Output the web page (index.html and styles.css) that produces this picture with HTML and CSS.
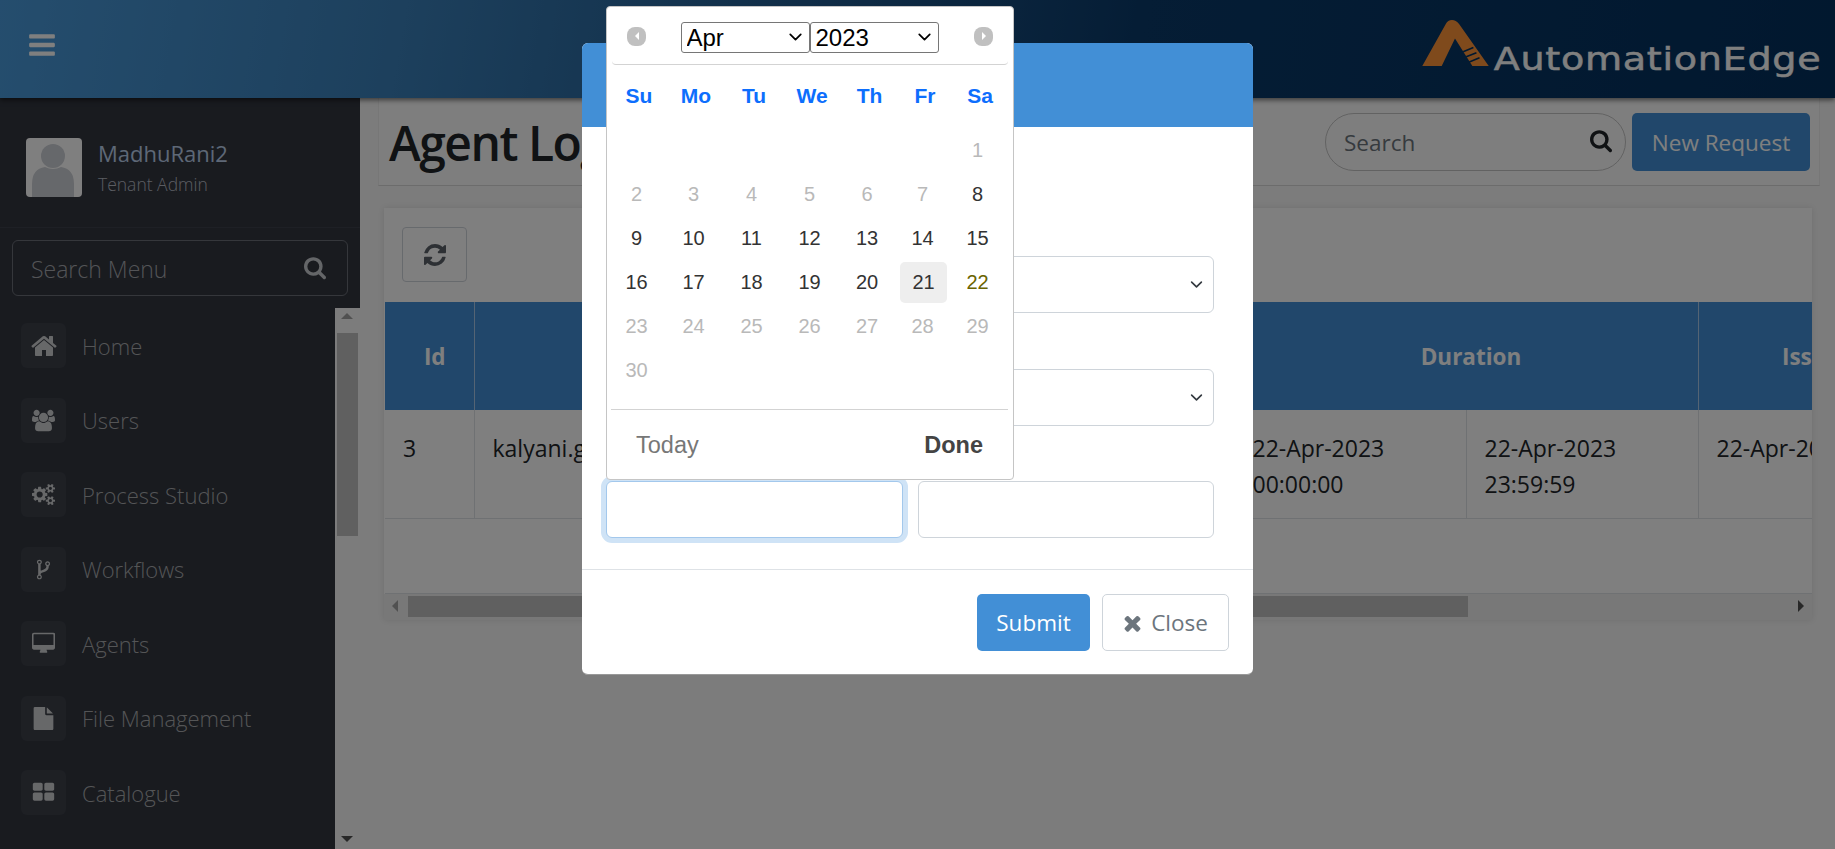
FILE: index.html
```html
<!DOCTYPE html>
<html lang="en">
<head>
<meta charset="utf-8">
<title>Agent Logs</title>
<link rel="stylesheet" href="styles.css">
</head>
<body>
<svg class="defs" aria-hidden="true">
  <symbol id="i-bars" viewBox="0 0 1536 1792"><path d="M1536 1344v128q0 26-19 45t-45 19h-1408q-26 0-45-19t-19-45v-128q0-26 19-45t45-19h1408q26 0 45 19t19 45zm0-512v128q0 26-19 45t-45 19h-1408q-26 0-45-19t-19-45v-128q0-26 19-45t45-19h1408q26 0 45 19t19 45zm0-512v128q0 26-19 45t-45 19h-1408q-26 0-45-19t-19-45v-128q0-26 19-45t45-19h1408q26 0 45 19t19 45z"/></symbol>
  <symbol id="i-search" viewBox="0 0 1664 1792"><path d="M1152 704q0-185-131.500-316.500t-316.500-131.500-316.500 131.500-131.500 316.500 131.500 316.500 316.500 131.500 316.500-131.500 131.500-316.500zm512 832q0 52-38 90t-90 38q-54 0-90-38l-343-342q-179 124-399 124-143 0-273.500-55.500t-225-150-150-225-55.500-273.500 55.500-273.500 150-225 225-150 273.500-55.500 273.500 55.500 225 150 150 225 55.500 273.500q0 220-124 399l343 343q37 37 37 90z"/></symbol>
  <symbol id="i-home" viewBox="0 0 1664 1792"><path d="M1408 992v480q0 26-19 45t-45 19h-384v-384h-256v384h-384q-26 0-45-19t-19-45v-480q0-1 .5-3t.5-3l575-474 575 474q1 2 1 6zm223-69l-62 74q-8 9-21 11h-3q-13 0-21-7l-692-577-692 577q-12 8-24 7-13-2-21-11l-62-74q-8-10-7-23.500t11-21.500l719-599q32-26 76-26t76 26l244 204v-195q0-14 9-23t23-9h192q14 0 23 9t9 23v408l219 182q10 8 11 21.500t-7 23.500z"/></symbol>
  <symbol id="i-users" viewBox="0 0 1920 1792"><path d="M593 896q-162 5-265 128h-134q-82 0-138-40.500t-56-118.500q0-353 124-353 6 0 43.500 21t97.500 42.500 119 21.500q67 0 133-23-5 37-5 66 0 139 81 256zm1071 637q0 120-73 189.500t-194 69.500h-874q-121 0-194-69.500t-73-189.500q0-53 3.500-103.500t14-109 26.500-108.500 43-97.500 62-81 85.500-53.500 111.500-20q10 0 43 21.500t73 48 107 48 135 21.500 135-21.500 107-48 73-48 43-21.500q61 0 111.500 20t85.500 53.500 62 81 43 97.500 26.500 108.500 14 109 3.500 103.500zm-1024-1277q0 106-75 181t-181 75-181-75-75-181 75-181 181-75 181 75 75 181zm704 384q0 159-112.500 271.500t-271.500 112.500-271.500-112.500-112.500-271.500 112.500-271.500 271.500-112.500 271.500 112.500 112.500 271.500zm576 225q0 78-56 118.500t-138 40.500h-134q-103-123-265-128 81-117 81-256 0-29-5-66 66 23 133 23 59 0 119-21.500t97.500-42.500 43.500-21q124 0 124 353zm-128-609q0 106-75 181t-181 75-181-75-75-181 75-181 181-75 181 75 75 181z"/></symbol>
  <symbol id="i-cogs" viewBox="0 0 1920 1792"><path d="M896 896q0-106-75-181t-181-75-181 75-75 181 75 181 181 75 181-75 75-181zm768 512q0-52-38-90t-90-38-90 38-38 90q0 53 37.500 90.500t90.500 37.500 90.500-37.500 37.500-90.500zm0-1024q0-52-38-90t-90-38-90 38-38 90q0 53 37.500 90.500t90.500 37.500 90.500-37.500 37.500-90.500zm-384 421v185q0 10-7 19.500t-16 10.500l-155 24q-11 35-32 76 34 48 90 115 7 11 7 20 0 12-7 19-23 30-82.500 89.500t-78.500 59.500q-11 0-21-7l-115-90q-37 19-77 31-11 108-23 155-7 24-30 24h-186q-11 0-20-7.500t-10-17.500l-23-153q-34-10-75-31l-118 89q-7 7-20 7-11 0-21-8-144-133-144-160 0-9 7-19 10-14 41-53t47-61q-23-44-35-82l-152-24q-10-1-17-9.500t-7-19.500v-185q0-10 7-19.500t16-10.500l155-24q11-35 32-76-34-48-90-115-7-11-7-20 0-12 7-20 22-30 82-89t79-59q11 0 21 7l115 90q34-18 77-32 11-108 23-154 7-24 30-24h186q11 0 20 7.500t10 17.500l23 153q34 10 75 31l118-89q8-7 20-7 11 0 21 8 144 133 144 160 0 8-7 19-12 16-42 54t-45 60q23 48 34 82l152 23q10 2 17 10.500t7 19.500zm640 533v140q0 16-149 31-12 27-30 52 51 113 51 138 0 4-4 7-122 71-124 71-8 0-46-47t-52-68q-20 2-30 2t-30-2q-14 21-52 68t-46 47q-2 0-124-71-4-3-4-7 0-25 51-138-18-25-30-52-149-15-149-31v-140q0-16 149-31 13-29 30-52-51-113-51-138 0-4 4-7 4-2 35-20t59-34 30-16q8 0 46 46.500t52 67.500q20-2 30-2t30 2q51-71 92-112l6-2q4 0 124 70 4 3 4 7 0 25-51 138 17 23 30 52 149 15 149 31zm0-1024v140q0 16-149 31-12 27-30 52 51 113 51 138 0 4-4 7-122 71-124 71-8 0-46-47t-52-68q-20 2-30 2t-30-2q-14 21-52 68t-46 47q-2 0-124-71-4-3-4-7 0-25 51-138-18-25-30-52-149-15-149-31v-140q0-16 149-31 13-29 30-52-51-113-51-138 0-4 4-7 4-2 35-20t59-34 30-16q8 0 46 46.500t52 67.500q20-2 30-2t30 2q51-71 92-112l6-2q4 0 124 70 4 3 4 7 0 25-51 138 17 23 30 52 149 15 149 31z"/></symbol>
  <symbol id="i-fork" viewBox="0 0 1024 1792"><path d="M288 1472q0-40-28-68t-68-28-68 28-28 68 28 68 68 28 68-28 28-68zm0-1152q0-40-28-68t-68-28-68 28-28 68 28 68 68 28 68-28 28-68zm640 128q0-40-28-68t-68-28-68 28-28 68 28 68 68 28 68-28 28-68zm96 0q0 52-26 96.500t-70 69.500q-2 287-226 414-67 38-203 81-128 40-169.500 71t-41.500 100v26q44 25 70 69.500t26 96.500q0 80-56 136t-136 56-136-56-56-136q0-52 26-96.500t70-69.500v-820q-44-25-70-69.500t-26-96.500q0-80 56-136t136-56 136 56 56 136q0 52-26 96.500t-70 69.500v497q54-26 154-57 55-17 87.500-29.500t70.500-31 59-39.500 40.500-51 28-69.500 8.500-91.500q-44-25-70-69.500t-26-96.500q0-80 56-136t136-56 136 56 56 136z"/></symbol>
  <symbol id="i-desktop" viewBox="0 0 1920 1792"><path d="M1792 992v-832q0-13-9.500-22.500t-22.500-9.500h-1600q-13 0-22.500 9.500t-9.500 22.500v832q0 13 9.500 22.500t22.500 9.500h1600q13 0 22.500-9.500t9.500-22.500zm128-832v1088q0 66-47 113t-113 47h-544q0 37 16 77.500t32 71 16 43.500q0 26-19 45t-45 19h-512q-26 0-45-19t-19-45q0-14 16-44t32-70 16-78h-544q-66 0-113-47t-47-113v-1088q0-66 47-113t113-47h1632q66 0 113 47t47 113z"/></symbol>
  <symbol id="i-file" viewBox="0 0 1536 1792"><path d="M1024 512v-472q22 14 36 28l408 408q14 14 28 36h-472zm-128 32q0 40 28 68t68 28h544v1056q0 40-28 68t-68 28h-1344q-40 0-68-28t-28-68v-1600q0-40 28-68t68-28h800v544z"/></symbol>
  <symbol id="i-th" viewBox="0 0 1664 1792"><path d="M768 1024v384q0 52-38 90t-90 38h-512q-52 0-90-38t-38-90v-384q0-52 38-90t90-38h512q52 0 90 38t38 90zm0-768v384q0 52-38 90t-90 38h-512q-52 0-90-38t-38-90v-384q0-52 38-90t90-38h512q52 0 90 38t38 90zm896 768v384q0 52-38 90t-90 38h-512q-52 0-90-38t-38-90v-384q0-52 38-90t90-38h512q52 0 90 38t38 90zm0-768v384q0 52-38 90t-90 38h-512q-52 0-90-38t-38-90v-384q0-52 38-90t90-38h512q52 0 90 38t38 90z"/></symbol>
  <symbol id="i-refresh" viewBox="0 0 1536 1792"><path d="M1511 1056q0 5-1 7-64 268-268 434.500t-478 166.500q-146 0-282.500-55t-243.500-157l-129 129q-19 19-45 19t-45-19-19-45v-448q0-26 19-45t45-19h448q26 0 45 19t19 45-19 45l-137 137q71 66 161 102t187 36q134 0 250-65t186-179q11-17 53-117 8-23 30-23h192q13 0 22.500 9.500t9.500 22.500zm25-800v448q0 26-19 45t-45 19h-448q-26 0-45-19t-19-45 19-45l138-138q-148-137-349-137-134 0-250 65t-186 179q-11 17-53 117-8 23-30 23h-199q-13 0-22.500-9.500t-9.500-22.500v-7q65-268 270-434.500t480-166.500q146 0 284 55.500t245 156.500l130-129q19-19 45-19t45 19 19 45z"/></symbol>
  <symbol id="i-times" viewBox="0 0 1408 1792"><path d="M1298 1322q0 40-28 68l-136 136q-28 28-68 28t-68-28l-294-294-294 294q-28 28-68 28t-68-28l-136-136q-28-28-28-68t28-68l294-294-294-294q-28-28-28-68t28-68l136-136q28-28 68-28t68 28l294 294 294-294q28-28 68-28t68 28l136 136q28 28 28 68t-28 68l-294 294 294 294q28 28 28 68z"/></symbol>
</svg>

<header class="topbar">
  <svg class="ic ic-bars"><use href="#i-bars"/></svg>
  <div class="logo">
    <svg class="logo-mark" viewBox="0 0 65 45">
      <path d="M0 45 L23 4 Q25 0 29 0 Q33 0 36 4 L65 45 H49 L32 18 L19 45 Z"/>
      <path class="logo-cut" d="M40 31 L50 27 M43 36 L53 32 M46 41 L56 37"/>
    </svg>
    <span class="logo-text">AutomationEdge</span>
  </div>
</header>

<div class="layout">
  <aside class="sidebar">
    <div class="user">
      <svg class="avatar" viewBox="0 0 56 59" preserveAspectRatio="none">
        <rect class="avatar-bg" width="56" height="59" rx="4"/>
        <circle class="avatar-fg" cx="27" cy="18" r="12"/>
        <path class="avatar-fg" d="M6 59 V46 Q6 31 19 29 Q27 33 35 29 Q48 31 48 46 V59 Z"/>
      </svg>
      <div class="user-info">
        <div class="user-name">MadhuRani2</div>
        <div class="user-role">Tenant Admin</div>
      </div>
    </div>
    <div class="menu-search">
      <span>Search Menu</span>
      <svg class="ic ic-menu-search"><use href="#i-search"/></svg>
    </div>
    <div class="menu-wrap">
      <nav class="menu">
        <a class="menu-item"><span class="menu-icon"><svg class="ic sz-28"><use href="#i-home"/></svg></span>Home</a>
        <a class="menu-item"><span class="menu-icon"><svg class="ic sz-23"><use href="#i-users"/></svg></span>Users</a>
        <a class="menu-item"><span class="menu-icon"><svg class="ic sz-23"><use href="#i-cogs"/></svg></span>Process Studio</a>
        <a class="menu-item"><span class="menu-icon"><svg class="ic sz-23"><use href="#i-fork"/></svg></span>Workflows</a>
        <a class="menu-item"><span class="menu-icon"><svg class="ic sz-23"><use href="#i-desktop"/></svg></span>Agents</a>
        <a class="menu-item"><span class="menu-icon"><svg class="ic sz-23"><use href="#i-file"/></svg></span>File Management</a>
        <a class="menu-item"><span class="menu-icon"><svg class="ic sz-23"><use href="#i-th"/></svg></span>Catalogue</a>
      </nav>
      <div class="vscroll">
        <span class="arrow arrow-up"></span>
        <div class="vthumb"></div>
        <span class="arrow arrow-down"></span>
      </div>
    </div>
  </aside>

  <main class="main">
    <div class="page-head">
      <h1>Agent Logs</h1>
      <div class="head-actions">
        <div class="pill-search"><span>Search</span><svg class="ic ic-pill"><use href="#i-search"/></svg></div>
        <button class="btn-new">New Request</button>
      </div>
    </div>
    <section class="card">
      <div class="toolbar">
        <button class="btn-refresh"><svg class="ic ic-refresh"><use href="#i-refresh"/></svg></button>
      </div>
      <div class="table-wrap">
        <table class="grid">
          <colgroup><col class="c-id"><col class="c-agent"><col class="c-date"><col class="c-date"><col class="c-issue"></colgroup>
          <thead><tr><th class="th-id">Id</th><th>Agent</th><th class="th-dur" colspan="2">Duration</th><th class="th-issue">Issue Date</th></tr></thead>
          <tbody><tr><td>3</td><td>kalyani.g</td><td>22-Apr-2023<br>00:00:00</td><td>22-Apr-2023<br>23:59:59</td><td>22-Apr-2023</td></tr></tbody>
        </table>
      </div>
      <div class="hscroll">
        <span class="arrow arrow-left"></span>
        <div class="hthumb"></div>
        <span class="arrow arrow-right"></span>
      </div>
    </section>
  </main>
</div>

<div class="backdrop"></div>

<div class="modal">
  <div class="modal-head"></div>
  <form class="modal-body">
    <div class="field"><select class="control select"></select></div>
    <div class="field"><select class="control select"></select></div>
    <div class="field field-dates">
      <input class="control focused" type="text">
      <input class="control" type="text">
    </div>
  </form>
  <div class="modal-foot">
    <button class="btn-submit" type="button">Submit</button>
    <button class="btn-close" type="button"><svg class="ic ic-times"><use href="#i-times"/></svg>Close</button>
  </div>
</div>

<div class="picker">
  <div class="picker-head">
    <span class="nav-dot"><span class="nav-tri nav-prev"></span></span>
    <div class="picker-selects">
      <select class="pick-sel"><option>Apr</option></select>
      <select class="pick-sel"><option>2023</option></select>
    </div>
    <span class="nav-dot"><span class="nav-tri nav-next"></span></span>
  </div>
  <div class="cal">
    <b>Su</b><b>Mo</b><b>Tu</b><b>We</b><b>Th</b><b>Fr</b><b>Sa</b>
    <i></i><i></i><i></i><i></i><i></i><i></i><span class="off">1</span>
    <span class="off">2</span><span class="off">3</span><span class="off">4</span><span class="off">5</span><span class="off">6</span><span class="off">7</span><span>8</span>
    <span>9</span><span>10</span><span>11</span><span>12</span><span>13</span><span>14</span><span>15</span>
    <span>16</span><span>17</span><span>18</span><span>19</span><span>20</span><span class="today">21</span><span class="sel">22</span>
    <span class="off">23</span><span class="off">24</span><span class="off">25</span><span class="off">26</span><span class="off">27</span><span class="off">28</span><span class="off">29</span>
    <span class="off">30</span>
  </div>
  <div class="picker-foot">
    <span class="pf-today">Today</span>
    <span class="pf-done">Done</span>
  </div>
</div>
</body>
</html>
```

FILE: styles.css
```css
* { box-sizing: border-box; }
html, body { margin: 0; height: 849px; overflow: hidden; }
body {
  width: 1835px;
  background: #f8f8f8;
  color: #212529;
  font-family: "Open Sans", "Noto Sans", sans-serif;
  font-size: 20px;
  position: relative;
}
.defs { width: 0; height: 0; position: absolute; }
.ic { fill: currentColor; display: block; }
button { font-family: inherit; }

/* top bar */
.topbar {
  height: 98px;
  display: flex;
  align-items: center;
  justify-content: space-between;
  padding: 0 14px 0 29px;
  background: linear-gradient(100deg, #4a9bdc 0%, #3a80ba 22%, #0a3a6a 62%, #03305e 100%);
  box-shadow: 0 2px 5px rgba(0,0,0,.55);
  position: relative;
  z-index: 2;
}
.ic-bars { width: 26px; height: 30px; color: #fff; margin-top: -8px; }
.logo { display: flex; align-items: flex-end; gap: 4px; margin-top: -7px; }
.logo-mark { width: 67px; height: 46px; fill: #ff9439; display: block; margin-bottom: 5px; }
.logo-cut { stroke: #03305e; stroke-width: 1.6; fill: none; }
.logo-text {
  font-family: "DejaVu Sans", sans-serif;
  font-size: 32px;
  line-height: 30px;
  color: #fff;
  letter-spacing: .6px;
  -webkit-text-stroke: .5px #fff;
  transform: scaleX(1.19);
  transform-origin: right center;
  margin-left: 53px;
  margin-bottom: -3px;
}

.layout { display: flex; height: 751px; }

/* sidebar */
.sidebar { width: 360px; flex: none; background: #32363f; display: flex; flex-direction: column; }
.user {
  height: 130px;
  flex: none;
  padding: 40px 0 0 26px;
  display: flex;
  gap: 16px;
  border-bottom: 1px solid #3d414a;
}
.avatar { width: 56px; height: 59px; display: block; }
.avatar-bg { fill: #fff; }
.avatar-fg { fill: #cdd0d6; }
.user-info { font-weight: 300; }
.user-name { font-size: 22px; line-height: 30px; color: #bcd0ec; font-weight: 400; }
.user-role { font-size: 17.5px; line-height: 28px; margin-top: 2px; color: #b6bac4; }
.menu-search {
  margin: 12px;
  height: 56px;
  flex: none;
  border: 1px solid #6b6f77;
  border-radius: 6px;
  padding: 1px 21px 0 18px;
  display: flex;
  align-items: center;
  justify-content: space-between;
  font-size: 23px;
  font-weight: 300;
  color: #a6a9ae;
}
.ic-menu-search { width: 22px; height: 24px; color: #c9ccd0; }
.menu-wrap { flex: 1; display: flex; min-height: 0; }
.menu { flex: 1; padding: 15px 0 0 21px; overflow: hidden; display: flex; flex-direction: column; gap: 29.5px; }
.menu-item {
  height: 45px;
  flex: none;
  display: flex;
  align-items: center;
  gap: 16px;
  font-size: 22px;
  font-weight: 300;
  color: #a8aaad;
  white-space: nowrap;
}
.menu-icon {
  width: 45px;
  height: 45px;
  border-radius: 6px;
  background: #3c4049;
  display: flex;
  align-items: center;
  justify-content: center;
  color: #cfd0d2;
}
.sz-28 { width: 28px; height: 28px; }
.sz-23 { width: 23px; height: 23px; }

/* native-looking scrollbars */
.vscroll {
  width: 25px;
  flex: none;
  background: #f8f8f8;
  position: relative;
  padding: 25px 2px 0;
}
.vthumb { height: 203px; background: #c1c1c1; }
.arrow { position: absolute; width: 0; height: 0; border: 6px solid transparent; }
.arrow-up { top: 5px; left: 6px; border-top: 0; border-bottom-color: #a3a3a3; }
.arrow-down { bottom: 7px; left: 6px; border-bottom: 0; border-top-color: #505050; }
.arrow-left { left: 8px; top: 6px; border-left: 0; border-right-color: #a3a3a3; }
.arrow-right { right: 8px; top: 6px; border-right: 0; border-left-color: #505050; }

/* main */
.main { flex: 1; padding: 0 15px 0 18px; min-width: 0; }
.page-head {
  height: 88px;
  display: flex;
  align-items: center;
  justify-content: space-between;
  padding: 2px 9px 1px 10px;
  background: #fdfdfd;
  border-left: 1px solid #eee;
  border-right: 1px solid #eee;
  border-bottom: 1px solid #d8d8d8;
}
h1 { margin: 0; font-size: 48px; font-weight: 600; letter-spacing: -1.5px; color: #212529; white-space: nowrap; }
.head-actions { display: flex; gap: 6px; align-items: center; }
.pill-search {
  width: 301px;
  height: 58px;
  border: 1px solid #c4c4c4;
  border-radius: 29px;
  padding: 0 13px 0 18px;
  display: flex;
  align-items: center;
  justify-content: space-between;
  color: #6c757d;
  font-size: 22.5px;
}
.ic-pill { width: 22px; height: 24px; color: #212529; }
.btn-new {
  width: 178px;
  height: 58px;
  border: 0;
  border-radius: 5px;
  background: #428fd6;
  color: #fff;
  font-size: 22.5px;
}
.card {
  margin: 22px 8px 0 6px;
  height: 412px;
  background: #fff;
  box-shadow: 0 0 6px rgba(0,0,0,.1);
  position: relative;
}
.toolbar { height: 94px; padding: 19px 18px 0; }
.btn-refresh {
  width: 65px;
  height: 55px;
  background: transparent;
  border: 1px solid #ced4da;
  border-radius: 4px;
  padding: 0;
  display: flex;
  align-items: center;
  justify-content: center;
}
.ic-refresh { width: 22px; height: 26px; color: #5b6168; }
.table-wrap { height: 292px; overflow: hidden; margin-left: 1px; border-bottom: 1px solid #dee2e6; }
.grid { border-collapse: collapse; table-layout: fixed; width: 1593px; }
.c-id { width: 89px; }
.c-agent { width: 760px; }
.c-date { width: 232px; }
.c-issue { width: 280px; }
.grid th {
  height: 108px;
  background: #428fd6;
  color: #fff;
  font-size: 22.5px;
  font-weight: 700;
  padding-top: 2px;
  border-right: 1px solid #a8c8e8;
  text-align: center;
}
.grid .th-id { padding-left: 12px; }
.grid .th-dur { padding-left: 11px; }
.grid .th-issue { padding-left: 6px; }
.grid td {
  height: 108px;
  padding: 20px 18px 0;
  vertical-align: top;
  font-size: 23px;
  line-height: 36px;
  border-right: 1px solid #dee2e6;
  border-bottom: 1px solid #dee2e6;
  white-space: nowrap;
}
.hscroll { height: 26px; background: #f1f1f1; position: relative; padding: 2px 0 2px 24px; }
.hthumb { width: 1060px; height: 21px; background: #c1c1c1; }

/* backdrop & dialog */
.backdrop { position: absolute; inset: 0; background: rgba(0,0,0,.5); z-index: 5; }
.modal {
  position: absolute;
  left: 582px;
  top: 43px;
  width: 671px;
  height: 632px;
  background: #fff;
  border-radius: 6px;
  z-index: 6;
  display: flex;
  flex-direction: column;
  border-bottom: 1px solid #999;
}
.modal-head { height: 84px; background: #428fd6; border-radius: 6px 6px 0 0; flex: none; }
.modal-body { flex: 1; padding: 129px 39px 0 24px; display: flex; flex-direction: column; gap: 55.6px; border-bottom: 1px solid #dee2e6; }
.control { height: 57px; width: 100%; border: 1px solid #ced4da; border-radius: 6px; background: #fff; display: block; outline: 0; }
.field-dates { display: flex; gap: 15px; }
.select {
  appearance: none;
  background: #fff url("data:image/svg+xml,%3Csvg xmlns='http://www.w3.org/2000/svg' viewBox='0 0 16 16'%3E%3Cpath fill='none' stroke='%23343a40' stroke-linecap='round' stroke-linejoin='round' stroke-width='2' d='M2 5l6 6 6-6'/%3E%3C/svg%3E") no-repeat right 9px center / 15px 13px;
}
.focused { border-color: #a3c8ec; box-shadow: 0 0 0 5px #cfe3f6; }
.modal-foot { height: 104px; flex: none; display: flex; justify-content: flex-end; align-items: flex-start; gap: 12px; padding: 24px 24px 0 0; }
.btn-submit {
  width: 113px;
  height: 57px;
  border: 0;
  border-radius: 5px;
  background: #428fd6;
  color: #fff;
  font-size: 22.5px;
}
.btn-close {
  width: 127px;
  height: 57px;
  background: #fff;
  border: 1px solid #ced4da;
  border-radius: 5px;
  color: #6c757d;
  font-size: 22.5px;
  display: flex;
  align-items: center;
  justify-content: center;
  gap: 9px;
}
.ic-times { width: 19px; height: 24px; }

/* date picker */
.picker {
  position: absolute;
  left: 606px;
  top: 6px;
  width: 408px;
  height: 474px;
  background: #fff;
  border: 1px solid #c5c5c5;
  border-radius: 4px;
  z-index: 7;
  font-family: "Liberation Sans", Arial, sans-serif;
  color: #333;
  padding: 3px 5px 0;
}
.picker-head {
  height: 55px;
  border-bottom: 1px solid #d3d3d3;
  border-radius: 0 0 4px 4px;
  display: flex;
  align-items: center;
  justify-content: space-between;
  padding: 0 15px 2px;
}
.nav-dot {
  width: 19px;
  height: 19px;
  border-radius: 8px;
  background: #c0c0c0;
  display: flex;
  align-items: center;
  justify-content: center;
}
.nav-tri { width: 0; height: 0; border: 4px solid transparent; }
.nav-prev { border-left: 0; border-right-color: #fff; }
.nav-next { border-right: 0; border-left-color: #fff; }
.picker-selects { display: flex; gap: 0; margin: 2px 1px 0 0; }
.pick-sel {
  appearance: none;
  width: 129px;
  height: 31px;
  font: 24px "Liberation Sans", Arial, sans-serif;
  color: #000;
  border: 1px solid #767676;
  border-radius: 3px;
  padding: 0 0 0 5px;
  background: #fff url("data:image/svg+xml,%3Csvg xmlns='http://www.w3.org/2000/svg' viewBox='0 0 16 16'%3E%3Cpath fill='none' stroke='%23000' stroke-linecap='round' stroke-linejoin='round' stroke-width='2' d='M2 5l6 6 6-6'/%3E%3C/svg%3E") no-repeat right 6px center / 15px 14px;
}
.cal {
  display: grid;
  grid-template-columns: 56px 58px 58px 58px 57px 54px 56px;
  grid-template-rows: 54px;
  grid-auto-rows: 44px;
  padding-top: 9px;
  margin-left: -1px;
  font-size: 20px;
  text-align: center;
  height: 345px;
  border-bottom: 1px solid #d3d3d3;
}
.cal b, .cal span { line-height: 44px; align-self: center; }
.cal b { color: #0d6efd; font-size: 21px; height: 44px; align-self: start; }
.cal span { padding-right: 5px; }
.cal i { font-style: normal; }
.cal .off { color: #b9b9b9; }
.cal .today { background: #eee; border-radius: 5px; height: 41px; line-height: 41px; margin: 0 5px 0 2px; padding-right: 0; }
.cal .sel { color: #6a6400; }
.picker-foot { display: flex; justify-content: space-between; padding: 19px 25px 0 24px; font-size: 23.5px; line-height: 32px; }
.pf-today { color: #777; }
.pf-done { font-weight: 700; color: #444; }
```
